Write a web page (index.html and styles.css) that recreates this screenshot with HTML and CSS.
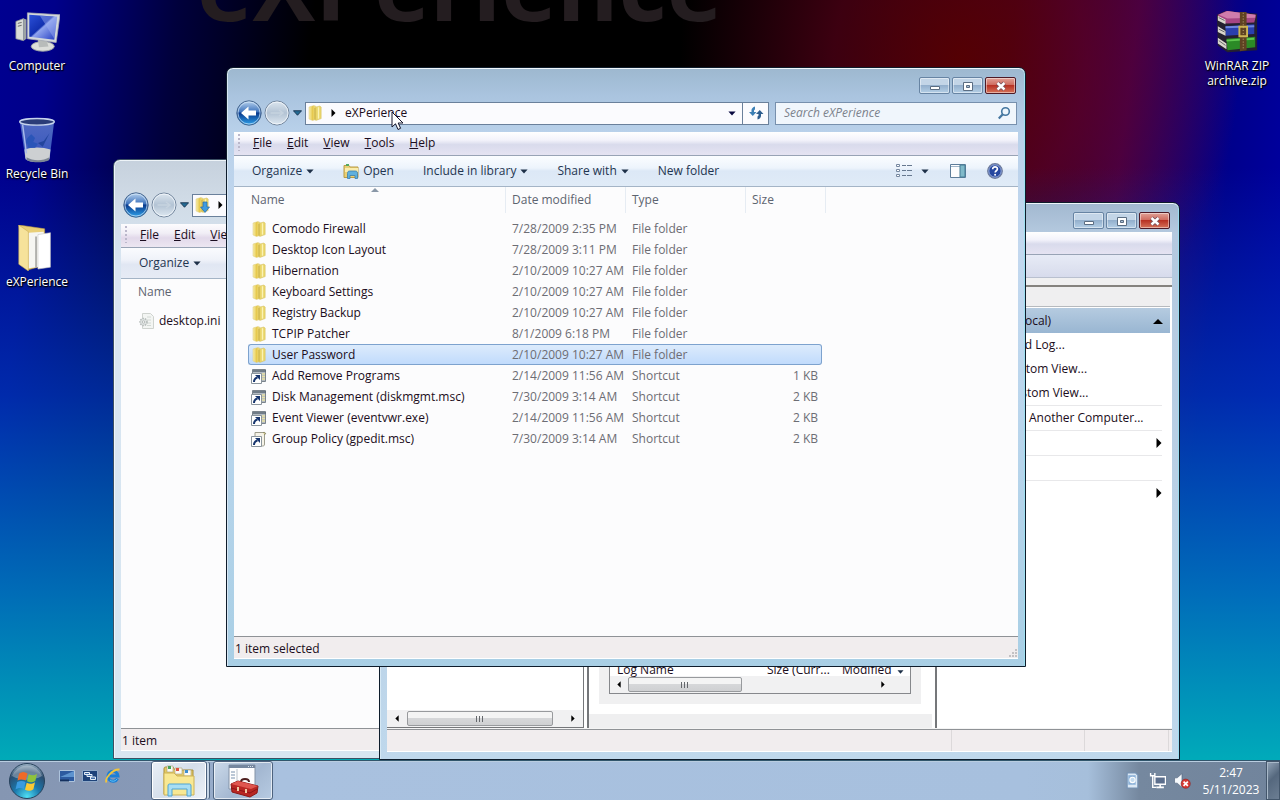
FILE: index.html
```html
<!DOCTYPE html>
<html lang="en">
<head>
<meta charset="utf-8">
<title>Desktop</title>
<link rel="stylesheet" href="styles.css">
</head>
<body>
<svg class="defs" aria-hidden="true">
  <defs>
    <linearGradient id="gBack" x1="0" y1="0" x2="0" y2="1"><stop offset="0" stop-color="#b9d3ee"/><stop offset=".45" stop-color="#3f74bd"/><stop offset=".5" stop-color="#0a3a8c"/><stop offset="1" stop-color="#2fa3ec"/></linearGradient>
    <linearGradient id="gFwd" x1="0" y1="0" x2="0" y2="1"><stop offset="0" stop-color="#dce6ef"/><stop offset=".5" stop-color="#b3c3d4"/><stop offset="1" stop-color="#dfe9f2"/></linearGradient>
    <linearGradient id="gFolder" x1="0" x2="1"><stop offset="0" stop-color="#f8efae"/><stop offset=".5" stop-color="#e6c94f"/><stop offset="1" stop-color="#f3e38a"/></linearGradient>
    <linearGradient id="gScreen" x1="0" y1="0" x2="1" y2="1"><stop offset="0" stop-color="#2b50d8"/><stop offset=".45" stop-color="#1230b0"/><stop offset=".5" stop-color="#8fa4ee"/><stop offset="1" stop-color="#2038c0"/></linearGradient>
    <radialGradient id="gOrb" cx=".5" cy=".95" r=".95"><stop offset="0" stop-color="#4fe0f5"/><stop offset=".4" stop-color="#1a78ac"/><stop offset=".75" stop-color="#2b4d70"/><stop offset="1" stop-color="#9fb6c8"/></radialGradient>
    <linearGradient id="gBin" x1="0" y1="0" x2="0" y2="1"><stop offset="0" stop-color="#5a76c8"/><stop offset=".7" stop-color="#4364c4"/><stop offset="1" stop-color="#c8d0dc"/></linearGradient>
    <symbol id="folder" viewBox="0 0 16 16"><path d="M2 2 7 .5l2 .9v13.100l-3.500 1L2 14z" fill="url(#gFolder)" stroke="#dccb7c" stroke-width=".5"/><path d="M8 2.200 12.800 1l1.400 1v11.600L9 15.400l-1-.6z" fill="#e9d569" stroke="#d5c067" stroke-width=".5"/><path d="M11.500 2.200v11.500" stroke="#fbf3b4" stroke-width="1.400"/><path d="M8 3v11.500" stroke="#c3a63a" stroke-width=".8"/></symbol>
    <symbol id="dlfolder" viewBox="0 0 16 16"><use href="#folder"/><path d="M9 5h4v5h2.500L11 15.500 6.500 10H9z" fill="#3f9be0" stroke="#2468a8" stroke-width=".7"/></symbol>
    <symbol id="link" viewBox="0 0 16 16"><path d="M1.500 1.500h13v12h-13z" fill="#b4bbc2" stroke="#7b848c"/><path d="M2 3h13" stroke="#5a6773" stroke-width="1.500"/><path d="M10.500 6H14M10.500 8.500H14M10.500 11H14" stroke="#e9e2a4" stroke-width="1.300"/><path d="M.5 5.500h10v10H.5z" fill="#fff" stroke="#8b959d"/><path d="M3 14c0-3 1.500-4 3.500-4.500" stroke="#17356e" stroke-width="2" fill="none"/><path d="M4 7h5v5z" fill="#17356e"/></symbol>
    <symbol id="script" viewBox="0 0 16 16"><path d="M4 1.500h9c2 0 2 2 .5 2V13c0 2-1 2-2 2H4z" fill="#f6f3e8" stroke="#9d9c8c"/><path d="M12 1.500c3-.5 3 2 1 2" fill="#e0d89c" stroke="#918d6a"/><path d="M.5 5.500h10v10H.5z" fill="#fff" stroke="#8b959d"/><path d="M3 14c0-3 1.500-4 3.500-4.500" stroke="#17356e" stroke-width="2" fill="none"/><path d="M4 7h5v5z" fill="#17356e"/></symbol>
    <symbol id="ini" viewBox="0 0 16 16"><path d="M4.500.5h8l3 3v12h-11z" fill="#f3f5f3" stroke="#cfd3cf"/><path d="M9 4h4M9 7h4M9 10h4M9 12.500h4" stroke="#d2d8d4"/><circle cx="5.500" cy="9" r="3.500" fill="#dfe3e2" stroke="#b5bbb9" stroke-width="1.500" stroke-dasharray="1.500 1"/><circle cx="5.500" cy="9" r="1.200" fill="#fff" stroke="#b5bbb9"/></symbol>
    <symbol id="back" viewBox="0 0 26 26"><circle cx="13" cy="13" r="12.200" fill="url(#gBack)" stroke="#48678e"/><circle cx="13" cy="13" r="11" fill="none" stroke="#dcecfa" stroke-opacity=".65"/><path d="m5 13 7.500-6.500v4H20v5h-7.500v4z" fill="#fff"/></symbol>
    <symbol id="forward" viewBox="0 0 26 26"><circle cx="13" cy="13" r="12" fill="url(#gFwd)" stroke="#73869d"/><circle cx="13" cy="13" r="11" fill="none" stroke="#f5f9fc" stroke-opacity=".8"/><path d="M6.500 13h12m-3.500-3 4 3-4 3" fill="none" stroke="#c6d3df" stroke-width="1.500"/></symbol>
    <symbol id="down" viewBox="0 0 10 6"><path d="M.5.5h9L5 5.500z"/></symbol>
    <symbol id="right" viewBox="0 0 6 10"><path d="M.5 0v10L5.500 5z"/></symbol>
    <symbol id="left" viewBox="0 0 6 10"><path d="M5.500 0v10L.5 5z"/></symbol>
    <symbol id="min" viewBox="0 0 14 12"><path d="M2.500 6.500h9v3h-9z" fill="#fff" stroke="#5b6d82"/></symbol>
    <symbol id="max" viewBox="0 0 14 12"><path d="M2.500 2.500h9v8h-9z" fill="#fff" stroke="#5b6d82"/><path d="M5.500 5.500h3v2h-3z" fill="#a9bfd6" stroke="#5b6d82"/></symbol>
    <symbol id="close" viewBox="0 0 14 12"><path d="m3.500 3 7 6.500m0-6.500-7 6.500" stroke="#75515a" stroke-width="4"/><path d="m3.500 3 7 6.500m0-6.500-7 6.500" stroke="#fff" stroke-width="2.400"/></symbol>
  </defs>
</svg>

<main class="desktop">
  <div class="brand" aria-hidden="true">eXPerience</div>

  <nav class="shortcuts shortcuts-left" aria-label="Desktop icons">
    <a class="shortcut" href="#computer">
      <svg viewBox="0 0 48 48"><path d="m2 13 8-3v23l-8-2z" fill="#d9dcd8" stroke="#8e9592" stroke-width=".8"/><path d="m10 10 3 1v20l-3 2z" fill="#9ca3a4"/><path d="M4 15l4-1M4 18l4-1" stroke="#666"/><ellipse cx="30" cy="39" rx="12" ry="5" fill="#dcdeda" stroke="#a2a8a5"/><path d="m25 32 9 1 2 6-10 1z" fill="#b8bcba"/><path d="m14 4 34 2-4 29-30-4z" fill="#d3d8dc" stroke="#a8adb0" stroke-width=".8"/><path d="m16 6 29 2-3 24-26-3z" fill="url(#gScreen)"/><path d="m27 7 18 1-3 23z" fill="#9fb2f5" opacity=".45"/></svg>
      <span>Computer</span>
    </a>
    <a class="shortcut" href="#bin">
      <svg viewBox="0 0 48 48"><path d="m6 4 36 0-5 40c-6 4-20 4-25 0z" fill="url(#gBin)" opacity=".9"/><path d="M11 34c7-3 19-3 27 0l-1 9c-6 4-19 4-25 0z" fill="#cdd0d2"/><path d="M13 42c7 4 17 4 24 0l-.5 3c-7 3-16 3-23 0z" fill="#7d8693"/><ellipse cx="24" cy="5" rx="18" ry="3.500" fill="#2b3d78" stroke="#c6d3ec" stroke-width="1.500"/><path d="m14 22 4-4 4 4-2 4 5 2-3 4h-7l-1-4-3-1z" fill="#2a55b8"/><path d="m37 17-6 8-6 2 5 4z" fill="#23459d"/><path d="m9 8 4 30" stroke="#a8b9ea" stroke-width="1.500"/></svg>
      <span>Recycle Bin</span>
    </a>
    <a class="shortcut" href="#experience">
      <svg viewBox="0 0 48 48"><path d="M5 0 32 4v38L14 47z" fill="#e9cf77" stroke="#b99a45" stroke-width=".6"/><path d="m15 8 16-1v36l-16 2z" fill="#f6f6f2"/><path d="m25 10 13-2v36l-13 2z" fill="#fff" stroke="#c4c4c0" stroke-width=".6"/><path d="m5 0 10 7v41L5 41z" fill="#f6e29b" stroke="#c9ab55" stroke-width=".6"/><path d="M23 12v32" stroke="#9b9b97" stroke-width="1.500"/></svg>
      <span>eXPerience</span>
    </a>
  </nav>

  <nav class="shortcuts shortcuts-right" aria-label="Archives">
    <a class="shortcut" href="#archive">
      <svg viewBox="0 0 48 48"><path d="m3 6 9-4 33 3v38l-31 2-10-7z" fill="#242030"/><path d="m4 6 9-4 31 4-2 8-29 1-8-4z" fill="#a64584"/><path d="m5 6 9 4 29-1V6L14 2z" fill="#cf7cac"/><path d="m12 18 30-2v10l-30 2z" fill="#2a3fae"/><path d="m12 19 30-1" stroke="#6f86dd" stroke-width="2"/><path d="m13 31 30-2v11l-29 3z" fill="#2b8a26"/><path d="m13 33 29-2" stroke="#5fc74f" stroke-width="2"/><path d="M4 7v5l8 4v-5zM4 18v6l8 4v-5zM4 30v6l9 6v-6z" fill="#d9d6cd"/><path d="M5 9l6 3M5 21l6 3M5 33l7 5" stroke="#66676a"/><path d="M27 3h7v40l-7 1z" fill="#5f4222"/><path d="M26.500 18.500h8v10h-8z" fill="none" stroke="#cdb552" stroke-width="2"/><path d="M30.500 4v39" stroke="#c9b27a" stroke-dasharray="1 2"/></svg>
      <span>WinRAR ZIP<br>archive.zip</span>
    </a>
  </nav>

  <section class="window window-ini" aria-label="Folder">
    <header class="chrome">
      <div class="captions"></div>
      <div class="nav">
        <button class="round" aria-label="Back"><svg><use href="#back"/></svg></button>
        <button class="round" aria-label="Forward"><svg><use href="#forward"/></svg></button>
        <button class="history" aria-label="Recent pages"><svg><use href="#down"/></svg></button>
        <div class="address"><svg class="icon16"><use href="#dlfolder"/></svg><svg class="chevron"><use href="#right"/></svg></div>
      </div>
    </header>
    <div class="menubar"><span class="grip"></span><button><u>F</u>ile</button><button><u>E</u>dit</button><button><u>V</u>iew</button></div>
    <div class="toolbar"><button>Organize <svg class="caret"><use href="#down"/></svg></button></div>
    <div class="pane">
      <table class="files">
        <colgroup><col class="c-name"><col class="c-date"></colgroup>
        <thead><tr><th>Name</th><th></th></tr></thead>
        <tbody><tr><td><span class="file"><svg class="icon16"><use href="#ini"/></svg>desktop.ini</span></td><td></td></tr></tbody>
      </table>
    </div>
    <footer class="status">1 item</footer>
  </section>

  <section class="window window-events" aria-label="Event Viewer">
    <header class="titlebar">
      <div class="captions">
        <button class="cap" aria-label="Minimize"><svg><use href="#min"/></svg></button>
        <button class="cap" aria-label="Maximize"><svg><use href="#max"/></svg></button>
        <button class="cap cap-close" aria-label="Close"><svg><use href="#close"/></svg></button>
      </div>
    </header>
    <div class="menubar"></div>
    <div class="toolstrip"></div>
    <div class="console">
      <div class="tree">
        <div class="scroll">
          <button class="arrow" aria-label="Scroll left"><svg><use href="#left"/></svg></button>
          <span class="thumb"></span>
          <button class="arrow arrow-end" aria-label="Scroll right"><svg><use href="#right"/></svg></button>
        </div>
      </div>
      <div class="summary">
        <div class="group">
          <div class="logs">
            <div class="log-head"><span class="log-name">Log Name</span><span class="log-size">Size (Curr...</span><span class="log-mod">Modified</span><svg class="caret"><use href="#down"/></svg></div>
            <div class="scroll">
              <button class="arrow" aria-label="Scroll left"><svg><use href="#left"/></svg></button>
              <span class="thumb"></span>
              <button class="arrow arrow-end" aria-label="Scroll right"><svg><use href="#right"/></svg></button>
            </div>
          </div>
        </div>
        <div class="summary-foot"></div>
      </div>
      <div class="actions">
        <div class="actions-title"></div>
        <button class="actions-head">Event Viewer (Local)<svg><path d="M0 6 5 1l5 5z"/></svg></button>
        <button class="action">Open Saved Log...</button>
        <button class="action">Create Custom View...</button>
        <button class="action">Import Custom View...</button>
        <button class="action ruled">Connect to Another Computer...</button>
        <button class="action ruled">View<svg><use href="#right"/></svg></button>
        <button class="action ruled">Refresh</button>
        <button class="action ruled">Help<svg><use href="#right"/></svg></button>
      </div>
    </div>
    <footer class="status cells"><span></span><span></span><span></span></footer>
  </section>

  <section class="window window-main" aria-label="eXPerience">
    <header class="chrome">
      <div class="captions">
        <button class="cap" aria-label="Minimize"><svg><use href="#min"/></svg></button>
        <button class="cap" aria-label="Maximize"><svg><use href="#max"/></svg></button>
        <button class="cap cap-close" aria-label="Close"><svg><use href="#close"/></svg></button>
      </div>
      <div class="nav">
        <button class="round" aria-label="Back"><svg><use href="#back"/></svg></button>
        <button class="round" aria-label="Forward"><svg><use href="#forward"/></svg></button>
        <button class="history" aria-label="Recent pages"><svg><use href="#down"/></svg></button>
        <div class="address">
          <svg class="icon16"><use href="#folder"/></svg><svg class="chevron"><use href="#right"/></svg>
          <button class="crumb">eXPerience</button>
          <button class="drop" aria-label="Previous locations"><svg class="caret"><use href="#down"/></svg></button>
          <button class="refresh" aria-label="Refresh"><svg viewBox="0 0 16 16"><path d="M1 7h2.500V5C3.500 3.500 5 2 7 1.500V4.500c-.6.200-1 .7-1 1.300V7h2.500l-3.750 4z" fill="#3c7fb5"/><path d="M15.500 9H13v2c0 1.500-1.500 3-3.500 3.500v-3c.6-.2 1-.7 1-1.300V9H8l3.750-4z" fill="#2d5d8e"/></svg></button>
        </div>
        <div class="search">
          <input type="text" placeholder="Search eXPerience" aria-label="Search eXPerience">
          <svg viewBox="0 0 14 14"><circle cx="8.500" cy="5.500" r="3.800" fill="#eef6fc" stroke="#4577a0" stroke-width="1.600"/><path d="m5.800 8.200-4 4.300" stroke="#4577a0" stroke-width="2.200"/></svg>
        </div>
      </div>
    </header>
    <div class="menubar"><span class="grip"></span><button><u>F</u>ile</button><button><u>E</u>dit</button><button><u>V</u>iew</button><button><u>T</u>ools</button><button><u>H</u>elp</button></div>
    <div class="toolbar">
      <button>Organize <svg class="caret"><use href="#down"/></svg></button>
      <button class="open"><svg class="icon16" viewBox="0 0 16 16"><path d="M1 2.500h5l1 1.500h8v10.500H1z" fill="#e9cf74" stroke="#b99b45"/><path d="M2 5h13v4H2z" fill="#f9ecad"/><path d="M3 1h3v2H3z" fill="#53a861"/><path d="M4.500 15.500v-5c0-2 1-2.500 2-2.500h6c1 0 2 .5 2 2.500v5h-2.500v-3h-5v3z" fill="#5fb0dd" stroke="#3b7fae" stroke-width=".8"/></svg>Open</button>
      <button>Include in library <svg class="caret"><use href="#down"/></svg></button>
      <button>Share with <svg class="caret"><use href="#down"/></svg></button>
      <button>New folder</button>
      <div class="tools">
        <button aria-label="Change view"><svg class="icon16" viewBox="0 0 16 16"><path d="M.5 1.500h3v2h-3zM.5 6.500h3v2h-3zM.5 11.500h3v2h-3z" fill="#fff" stroke="#7688a0"/><path d="M6 2.500h4m1 0h5M6 7.500h4m1 0h5M6 12.500h4m1 0h5" stroke="#66788f"/></svg><svg class="caret"><use href="#down"/></svg></button>
        <button aria-label="Preview pane"><svg class="icon16" viewBox="0 0 16 16"><path d="M.5 1.500h15v13H.5z" fill="#fcfdfe" stroke="#5d7d9a"/><path d="M1 3.500h14" stroke="#9fb5c9"/><path d="M10 2h5v12h-5z" fill="#7fb9c9" stroke="#447b94"/></svg></button>
        <button aria-label="Help"><svg class="icon16" viewBox="0 0 16 16"><circle cx="8" cy="8" r="7.300" fill="#26479f" stroke="#707d9b" stroke-width="1.200"/><circle cx="8" cy="8" r="6.200" fill="none" stroke="#b5c6ea" stroke-width=".8"/><path d="M5.700 6.200c0-3.300 4.800-3 4.700-.2 0 1.700-2.200 1.800-2.200 3.500" fill="none" stroke="#fff" stroke-width="1.700"/><circle cx="8.100" cy="11.800" r="1" fill="#fff"/></svg></button>
      </div>
    </div>
    <div class="pane">
      <table class="files">
        <colgroup><col class="c-name"><col class="c-date"><col class="c-type"><col class="c-size"><col class="c-end"></colgroup>
        <thead><tr><th class="sorted">Name<svg class="sort"><path d="M0 4 4 0l4 4z" fill="#8a98a8"/></svg></th><th>Date modified</th><th>Type</th><th colspan="2">Size</th></tr></thead>
        <tbody>
          <tr><td><span class="file"><svg class="icon16"><use href="#folder"/></svg>Comodo Firewall</span></td><td>7/28/2009 2:35 PM</td><td>File folder</td><td></td></tr>
          <tr><td><span class="file"><svg class="icon16"><use href="#folder"/></svg>Desktop Icon Layout</span></td><td>7/28/2009 3:11 PM</td><td>File folder</td><td></td></tr>
          <tr><td><span class="file"><svg class="icon16"><use href="#folder"/></svg>Hibernation</span></td><td>2/10/2009 10:27 AM</td><td>File folder</td><td></td></tr>
          <tr><td><span class="file"><svg class="icon16"><use href="#folder"/></svg>Keyboard Settings</span></td><td>2/10/2009 10:27 AM</td><td>File folder</td><td></td></tr>
          <tr><td><span class="file"><svg class="icon16"><use href="#folder"/></svg>Registry Backup</span></td><td>2/10/2009 10:27 AM</td><td>File folder</td><td></td></tr>
          <tr><td><span class="file"><svg class="icon16"><use href="#folder"/></svg>TCPIP Patcher</span></td><td>8/1/2009 6:18 PM</td><td>File folder</td><td></td></tr>
          <tr class="selected"><td><span class="file"><svg class="icon16"><use href="#folder"/></svg>User Password</span></td><td>2/10/2009 10:27 AM</td><td>File folder</td><td></td></tr>
          <tr><td><span class="file"><svg class="icon16"><use href="#link"/></svg>Add Remove Programs</span></td><td>2/14/2009 11:56 AM</td><td>Shortcut</td><td>1 KB</td></tr>
          <tr><td><span class="file"><svg class="icon16"><use href="#link"/></svg>Disk Management (diskmgmt.msc)</span></td><td>7/30/2009 3:14 AM</td><td>Shortcut</td><td>2 KB</td></tr>
          <tr><td><span class="file"><svg class="icon16"><use href="#link"/></svg>Event Viewer (eventvwr.exe)</span></td><td>2/14/2009 11:56 AM</td><td>Shortcut</td><td>2 KB</td></tr>
          <tr><td><span class="file"><svg class="icon16"><use href="#script"/></svg>Group Policy (gpedit.msc)</span></td><td>7/30/2009 3:14 AM</td><td>Shortcut</td><td>2 KB</td></tr>
        </tbody>
      </table>
    </div>
    <footer class="status">1 item selected<svg class="resize" viewBox="0 0 10 10"><path d="M7 1h2v2H7zM7 4h2v2H7zM7 7h2v2H7zM4 4h2v2H4zM4 7h2v2H4zM1 7h2v2H1z" fill="#c3c1c3"/></svg></footer>
  </section>

  <svg class="cursor" viewBox="0 0 13 20"><path d="M1 1v15l3.500-3.200L7 18.500l2.600-1.200L7.200 12H12z" fill="#fff" stroke="#14142a"/></svg>
</main>

<footer class="taskbar">
  <button class="orb" aria-label="Start"><svg viewBox="0 0 38 38"><circle cx="19" cy="19" r="17.500" fill="url(#gOrb)" stroke="#27425c"/><path d="M4 14a16 16 0 0 1 30 0c-9 5-21 5-30 0z" fill="#fff" opacity=".3"/><path d="M11 11.500c3-2 5.500-2 8.500 0l-1.700 7c-3-1.500-5.500-1.500-8.300 0z" fill="#ee6a28"/><path d="M20.700 12.200c3 1.500 5.300 1.500 8.300-.5l-1.600 7c-3 2-5.400 2-8.400.5z" fill="#8fc33c"/><path d="M9.200 20c3-1.500 5.300-1.500 8.300 0L15.900 27c-3-1.500-5.400-1.500-8.400.5z" fill="#3a9be0"/><path d="M18.700 20.700c3 1.500 5.300 1.500 8.300-.5l-1.600 7c-3 2-5.400 2-8.400.5z" fill="#fbc934"/></svg></button>
  <div class="quick">
    <button aria-label="Show desktop"><svg viewBox="0 0 16 16"><path d="M.5 2.500h15v11H.5z" fill="#2c5aa0" stroke="#adc3dc"/><path d="m1 9 14-6v6z" fill="#5d93cf"/><path d="M1 12.500h9" stroke="#14305e" stroke-width="2"/></svg></button>
    <button aria-label="Switch windows"><svg viewBox="0 0 16 16"><path d="M.5 2.500h15v11H.5z" fill="#1d4279" stroke="#8fa9c8"/><path d="M2.500 4.500h5v2h-5zM5 6.500h5v2H5zM8.500 9h5v2.500h-5z" fill="#3e6ba6" stroke="#e6f0fa"/></svg></button>
    <button aria-label="Internet Explorer"><svg viewBox="0 0 16 16"><path d="M12.500 10.500A5 5 0 1 1 13 8H5" fill="none" stroke="#1c7fd6" stroke-width="3"/><path d="M12 11a4.500 4.500 0 0 1-7 1" fill="none" stroke="#62c3f5"/><path d="M1.500 14.500C-.5 11 7 1 14.500 1.500" fill="none" stroke="#f1c53b" stroke-width="1.800"/></svg></button>
  </div>
  <button class="task task-stack" aria-label="Windows Explorer"><svg viewBox="0 0 34 34"><path d="M2 5c0-2 1-2 2-2h7l2 3h18v24H2z" fill="#e4ca65" stroke="#a98f3c"/><path d="M5 2h6v6H5zM13 4h7v6h-7zM22 6h7v6h-7z" fill="#fafaf4" stroke="#b3ab83" stroke-width=".7"/><path d="M6 2h3v3H6z" fill="#45a35a"/><path d="M14 4h3v3h-3z" fill="#e0513f"/><path d="M23 6h3v3h-3z" fill="#3d8dd0"/><path d="M2 9h10l3 3h17v19H2z" fill="#f8e893" stroke="#cdb257"/><path d="M6 32V22c0-2 1-2 2-2h19c1 0 2 0 2 2v10h-4v-7H10v7z" fill="#a7def4" stroke="#4ea4d2"/></svg></button>
  <button class="task" aria-label="Event Viewer"><svg viewBox="0 0 34 34"><path d="M3 1h26v24H3z" fill="#fdfdfe" stroke="#8392a6"/><path d="M3 2.500h26" stroke="#75869e" stroke-width="3"/><path d="M22 2.500h6" stroke="#dce5ee" stroke-dasharray="1 1"/><path d="M11 5v19" stroke="#b9c2cc"/><path d="M5 8h4M5 11h4M5 14h4" stroke="#7991ae"/><path d="M15 18c0-4 8-4 8 0" fill="none" stroke="#4f2020" stroke-width="2"/><path d="m5 20 7-3 20 5-1 7-7 4-18-5z" fill="#b82723" stroke="#8b1716"/><path d="m5 20 7-3 20 5-7 3z" fill="#e0564f"/><path d="m5 24 19 5 7-4" stroke="#8e1517" fill="none"/><path d="M11 23h2v4h-2zM19 25h2v4h-2z" fill="#f0c9a4"/></svg></button>
  <div class="tray">
    <button aria-label="Documents"><svg viewBox="0 0 16 16"><path d="M3 1h8l2 2v12H3z" fill="#dce9f5" stroke="#7492b4"/><path d="M4 3h7v9H4z" fill="#8db2d8"/><circle cx="8" cy="7.500" r="2.500" fill="#c5dcef" stroke="#fff"/></svg></button>
    <button aria-label="Network"><svg viewBox="0 0 16 16"><path d="M5.500 4.500h10v7h-10z" fill="#5c6f8d" stroke="#fff" stroke-width="1.300"/><path d="M7 14.500h7M10.500 12v2" stroke="#fff" stroke-width="1.500"/><path d="M1.500 1v2.500h4V1M3.500 3v11.500H7" fill="none" stroke="#fff" stroke-width="1.300"/></svg></button>
    <button aria-label="Volume muted"><svg viewBox="0 0 16 16"><path d="M.5 5.500H3l4.500-4v13L3 10.500H.5z" fill="#f7fafd" stroke="#4e617d" stroke-width=".6"/><circle cx="11" cy="11" r="4.300" fill="#d83a34" stroke="#8d2222" stroke-width=".6"/><path d="m9 9 4 4m0-4-4 4" stroke="#fff" stroke-width="1.600"/></svg></button>
    <time class="clock"><span>2:47</span><span>5/11/2023</span></time>
    <button class="peek" aria-label="Show desktop"></button>
  </div>
</footer>
</body>
</html>
```
FILE: styles.css
```css
* { box-sizing: border-box; }

body {
  margin: 0;
  height: 100vh;
  display: flex;
  flex-direction: column;
  overflow: hidden;
  font: 12px/16px "Open Sans", "Noto Sans", sans-serif;
  color: #1b0d20;
  background: #000;
}

button {
  display: flex;
  align-items: center;
  margin: 0;
  padding: 0;
  border: 0;
  background: none;
  font: inherit;
  color: inherit;
  white-space: nowrap;
}

svg { display: block; flex: none; }
.defs { position: absolute; width: 0; height: 0; }
.icon16 { width: 16px; height: 16px; }
.caret { width: 9px; height: 5px; fill: #1e3048; }

/* Desktop */
.desktop {
  position: relative;
  flex: 1;
  overflow: hidden;
  background:
    linear-gradient(180deg, rgba(0, 30, 170, 0) 22%, rgba(0, 60, 185, .7) 52%, rgba(0, 120, 190, .9) 78%, rgba(0, 176, 186, .97) 100%),
    radial-gradient(ellipse 280px 330px at 960px 60px, rgba(110, 0, 0, .7), rgba(110, 0, 30, .55) 45%, rgba(100, 0, 60, 0) 100%),
    linear-gradient(97deg, #000090 0%, #00008a 4%, #00003c 13%, #000 23%, #000 62%, #200010 74%, #3a0050 83%, #00008c 91%, #0000b4 100%);
}

.brand {
  position: absolute;
  top: -75px;
  left: 197px;
  font-size: 94px;
  line-height: 120px;
  font-weight: 700;
  color: #241d20;
}

.shortcuts {
  position: absolute;
  top: 8px;
  display: flex;
  flex-direction: column;
  gap: 36px;
}
.shortcuts-left { left: 0; }
.shortcuts-right { right: 6px; }
.shortcut {
  width: 74px;
  min-height: 72px;
  display: flex;
  flex-direction: column;
  align-items: center;
  gap: 2px;
  color: #fff;
  text-align: center;
  text-decoration: none;
  text-shadow: 0 1px 2px #000, 1px 1px 1px #000;
  white-space: nowrap;
}
.shortcut svg { width: 48px; height: 48px; padding: 1px; }
.shortcut span { line-height: 15px; }

/* Windows */
.window {
  position: absolute;
  width: 800px;
  display: flex;
  flex-direction: column;
  padding: 0 7px 7px;
  border: 1px solid #0e1c2b;
  border-radius: 7px 7px 0 0;
}
.window-main {
  left: 226px;
  top: 67px;
  height: 600px;
  background: linear-gradient(180deg, #9db8cf 0, #aac4df 28px, #b9d1ea 64px, #c3d8ef 180px, #b9d5ec 60%, #a9cfe5 100%);
  box-shadow: inset 0 1px #eff6fb, inset 1px 0 #d8e7f4, inset -1px 0 #9fe0f0;
}
.window-ini {
  left: 113px;
  top: 159px;
  height: 600px;
  border-color: #3c5063;
  background: linear-gradient(180deg, #c6d1dd 0, #d0dbe6 40px, #d8e5f1 100px, #d7e6f1 100%);
  box-shadow: inset 0 1px #eef4f8, inset 1px 0 #edf5fa;
}
.window-events {
  left: 379px;
  top: 202px;
  width: 801px;
  height: 558px;
  background: linear-gradient(180deg, #a2b8d0 0, #b4c9df 30px, #bfd8ec 100%);
  box-shadow: inset 0 1px #eef5fa, inset 1px 0 #d5e8f4, inset -1px 0 #9adcf0;
}

.chrome { padding-top: 9px; }
.captions {
  display: flex;
  justify-content: flex-end;
  gap: 2px;
  height: 17px;
  padding-right: 2px;
}
.cap {
  width: 31px;
  justify-content: center;
  border: 1px solid #6784a3;
  border-radius: 2px;
  background: linear-gradient(180deg, #c3d5e7 0 45%, #94b0cd 50%, #b4cfe6 100%);
  box-shadow: inset 0 0 0 1px rgba(255, 255, 255, .45);
}
.cap svg { width: 14px; height: 12px; }
.cap-close {
  border-color: #4e1a26;
  background: linear-gradient(180deg, #e0a197 0, #cf6d60 45%, #b83224 50%, #d5735a 100%);
}
.titlebar { height: 29px; padding-top: 9px; }

.nav {
  display: flex;
  align-items: center;
  height: 26px;
  margin: 6px 1px 6px 2px;
}
.round { margin-right: 2px; border-radius: 13px; }
.round svg { width: 26px; height: 26px; }
.history { width: 10px; margin-right: 3px; justify-content: center; }
.history svg { width: 9px; height: 6px; fill: #236b94; stroke: #17324e; }
.address {
  flex: 1;
  display: flex;
  align-items: center;
  height: 23px;
  padding-left: 1px;
  border: 1px solid #6a809b;
  background: #fbfbfe;
}
.chevron { width: 5px; height: 8px; margin: 0 9px 0 8px; }
.crumb { flex: 1; }
.drop { width: 20px; justify-content: center; align-self: stretch; }
.drop .caret { width: 8px; fill: #0a0a40; }
.refresh {
  width: 26px;
  justify-content: center;
  align-self: stretch;
  border-left: 1px solid #6a809b;
}
.refresh svg { width: 16px; height: 16px; }
.search {
  width: 242px;
  height: 23px;
  margin-left: 6px;
  display: flex;
  align-items: center;
  padding: 0 5px 0 8px;
  border: 1px solid #7790ad;
  background: #f0f6fc;
}
.search input {
  flex: 1;
  min-width: 0;
  padding: 0;
  border: 0;
  background: none;
  font: inherit;
}
.search input::placeholder { color: #7c828c; font-style: italic; opacity: 1; }
.search svg { width: 14px; height: 14px; }

.menubar {
  display: flex;
  align-items: center;
  height: 24px;
  padding: 0 0 2px 4px;
  border-bottom: 1px solid #98a3b5;
  background: linear-gradient(180deg, #fff 0, #f3f3fb 35%, #d9dbec 55%, #e5e3f2 100%);
}
.menubar button { padding: 0 8px 0 7px; }
.grip {
  width: 2px;
  height: 17px;
  margin-right: 6px;
  background: repeating-linear-gradient(180deg, #bbb8cb 0 2px, transparent 2px 4px);
}
.toolbar {
  display: flex;
  align-items: center;
  gap: 29px;
  height: 31px;
  padding: 0 15px 0 18px;
  border-bottom: 1px solid #a4b4c6;
  background: linear-gradient(180deg, #fbfdff 0, #edf4fc 40%, #dce8f6 50%, #e0ebf7 100%);
  color: #1f3550;
}
.toolbar .caret { width: 8px; margin-left: 4px; }
.open { gap: 4px; }
.tools { flex: 1; display: flex; justify-content: flex-end; gap: 21px; }
.tools .caret { margin-left: 9px; }
.toolbar .tools .caret { margin-left: 9px; }

.pane { flex: 1; padding-left: 14px; background: #fcfcfd; overflow: hidden; }
.files { border-collapse: separate; border-spacing: 0; table-layout: fixed; width: 578px; }
.c-name { width: 258px; }
.c-date, .c-type { width: 120px; }
.c-size { width: 76px; }
.c-end { width: 4px; }
.files th {
  height: 26px;
  padding: 0 6px;
  border-right: 1px solid #e6ecf3;
  font-weight: 400;
  text-align: left;
  color: #5c6470;
}
.files th:first-child { padding-left: 3px; }
.sorted { position: relative; }
.sort { position: absolute; top: 1px; left: 123px; width: 8px; height: 4px; }
.files tbody::before { content: ""; display: block; height: 5px; }
.files td {
  height: 21px;
  padding: 0 6px;
  border: 1px solid transparent;
  border-width: 1px 0;
  line-height: 16px;
  color: #6d6d74;
  white-space: nowrap;
}
.files td:first-child { padding-left: 3px; color: #1b0d20; }
.files td:nth-child(4) { padding: 0 4px; text-align: right; }
.file { display: flex; align-items: center; gap: 5px; }
.selected td {
  border-color: #7da2ce;
  background: linear-gradient(180deg, #dcebfc, #c1dbfc);
}
.files .selected td:first-child { border-left: 1px solid #7da2ce; border-radius: 3px 0 0 3px; padding-left: 2px; }
.files .selected td:last-child { border-right: 1px solid #7da2ce; border-radius: 0 3px 3px 0; }

.status {
  display: flex;
  align-items: center;
  height: 23px;
  padding: 3px 0 0 1px;
  border-top: 1px solid #8f9296;
  background: #f1edee;
  border-bottom: 1px solid #fff;
}
.resize { width: 10px; height: 10px; margin-left: auto; align-self: flex-end; }

.window-ini .menubar { background: linear-gradient(180deg, #fdfcfe 0, #f1eef6 40%, #e2d9ea 60%, #ece6f1 100%); }
.window-ini .toolbar { background: linear-gradient(180deg, #fafbfe 0, #eff2f9 40%, #e1e7f3 55%, #e6ebf5 100%); }

/* Event Viewer */
.window-events .menubar { height: 23px; }
.toolstrip {
  height: 23px;
  margin-bottom: 7px;
  border-bottom: 1px solid #b9c0cf;
  background: linear-gradient(180deg, #e7ebf6, #d7dbec);
  box-shadow: 0 7px #f0f0f1;
}
.console {
  flex: 1;
  display: flex;
  gap: 3px;
  background: #fff;
  border-top: 2px solid #85837f;
  border-bottom: 1px solid #f4f4f4;
  min-height: 0;
}
.tree, .summary { display: flex; flex-direction: column; justify-content: flex-end; }
.tree { width: 197px; border-right: 1px solid #75777a; border-bottom: 1px solid #75777a; }
.summary { width: 350px; border: solid #75777a; border-width: 0 2px 0 2px; background: #fff; }
.actions { flex: 1; margin-left: -3px; margin-right: 2px; display: flex; flex-direction: column; }
.scroll { display: flex; align-items: center; height: 17px; background: #f1f1f2; }
.arrow { width: 20px; height: 16px; justify-content: center; }
.arrow svg { width: 4px; height: 7px; }
.arrow-end { margin-left: auto; }
.thumb {
  width: 146px;
  height: 15px;
  border: 1px solid #989a9d;
  border-radius: 2px;
  background:
    repeating-linear-gradient(90deg, #65686c 0 1px, transparent 1px 3px) center / 8px 6px no-repeat,
    linear-gradient(180deg, #f4f4f4 0 45%, #d6d7d9 50%, #cfd0d2);
}
.group { margin: 0 14px 0 10px; padding: 0 10px 10px; background: #f0f0f1; }
.logs { border: 1px solid #86888c; background: #fff; }
.logs .thumb { width: 114px; }
.logs .arrow { width: 18px; }
.logs .arrow-end { margin-right: 18px; }
.log-head { display: flex; align-items: center; height: 15px; padding: 2px 0 0 7px; }
.log-name { width: 150px; }
.log-size { width: 75px; }
.log-mod { width: 55px; }
.log-head .caret { width: 7px; height: 4px; align-self: flex-end; margin-bottom: 2px; }
.summary-foot { height: 24px; margin-right: 3px; background: linear-gradient(180deg, #fff 0 10px, #efeff0 10px); }
.actions-title { height: 20px; background: #efeff0; border-bottom: 1px solid #b6babe; }
.actions-head {
  height: 26px;
  padding: 0 7px 0 3px;
  justify-content: space-between;
  border-top: 1px solid #fff;
  background: linear-gradient(180deg, #b5cbe0, #99b6d2);
}
.actions-head svg { width: 10px; height: 6px; }
.action { height: 24px; margin: 0 8px 0 28px; justify-content: space-between; }
.action svg { width: 6px; height: 10px; }
.ruled { height: 25px; border-top: 1px solid #e8e8ea; }
.cells { padding: 0 3px 0 0; }
.cells span { align-self: stretch; border-right: 1px solid #dcd9da; width: 84px; }
.cells span:first-child { flex: 1; }
.cells span:nth-child(2) { width: 133px; }

.cursor { position: absolute; left: 391px; top: 111px; width: 13px; height: 20px; }

/* Taskbar */
.taskbar {
  display: flex;
  height: 40px;
  border-top: 1px solid #31566c;
  box-shadow: inset 0 1px #b9cde0;
  background: linear-gradient(90deg, #8596b2 0, #8799b7 150px, #a9c1df 280px, #a7c0de 80%, #a6bfdb 85%, #75889f 89%, #71849c 100%);
}
.orb { margin-left: 8px; }
.orb svg { width: 38px; height: 38px; }
.quick { display: flex; align-items: flex-start; gap: 7px; padding: 7px 0 0 13px; }
.quick svg { width: 16px; height: 16px; }
.task {
  width: 60px;
  margin-left: 3px;
  justify-content: center;
  border: 1px solid #4c627e;
  border-radius: 3px;
  background: linear-gradient(135deg, #cbd9e9, #a3b7d1 55%, #b7cbe2);
  box-shadow: inset 0 0 0 1px rgba(255, 255, 255, .65);
}
.task svg { width: 34px; height: 34px; }
.task-stack {
  margin-left: 30px;
  width: 56px;
  margin-right: 3px;
  background: linear-gradient(135deg, #e9eff6, #d4deea 50%, #edf2f8);
  box-shadow: inset 0 0 0 1px #fff, 3px 0 0 -1px #c7d6e6, 4px 0 0 -1px #4c627e;
}
.tray { margin-left: auto; display: flex; align-items: center; gap: 8px; color: #fff; }
.tray svg { width: 17px; height: 17px; }
.clock {
  width: 72px;
  margin-left: -4px;
  display: flex;
  flex-direction: column;
  line-height: 17px;
  text-align: center;
}
.peek {
  width: 14px;
  margin-left: -9px;
  align-self: stretch;
  border: 1px solid #43566b;
  background: linear-gradient(135deg, #93a5b8 0, #55687e 45%, #6c7e93 100%);
  box-shadow: inset 1px 1px #a9b9c9;
}
```
